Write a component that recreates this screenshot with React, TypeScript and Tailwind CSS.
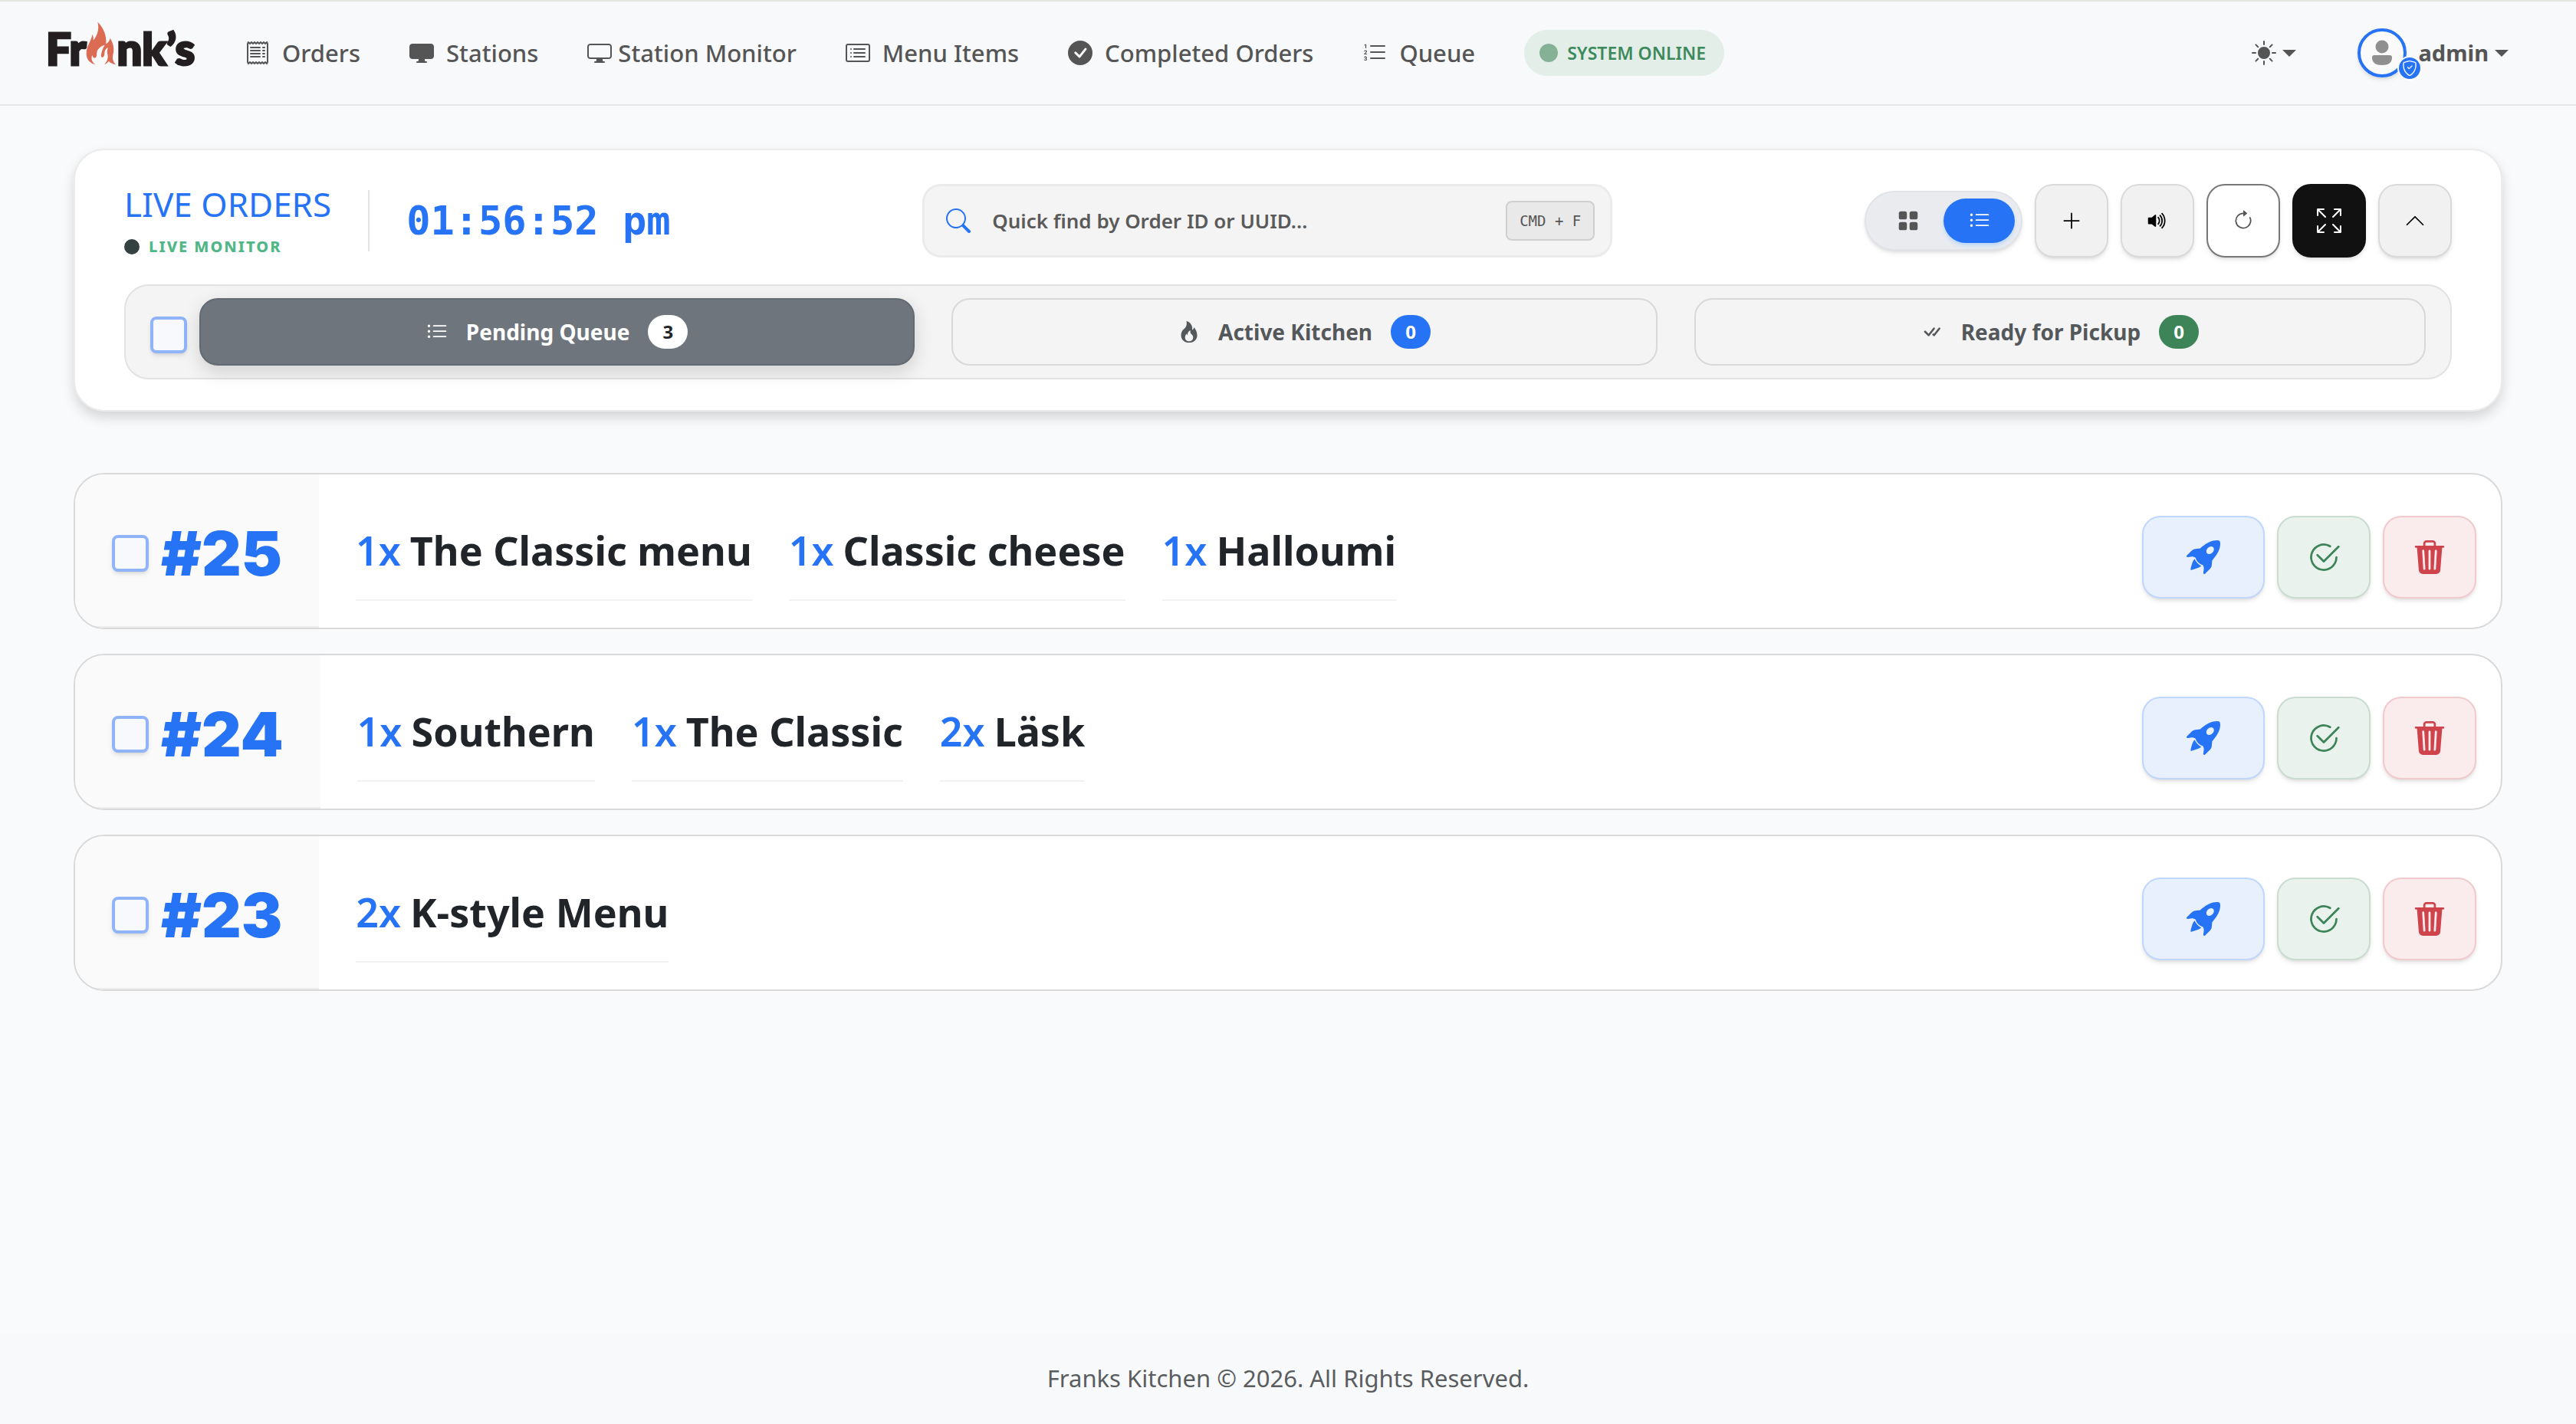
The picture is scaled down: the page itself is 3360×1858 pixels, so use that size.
import type { ReactNode } from "react";
import {
  BsArrowClockwise,
  BsArrowsFullscreen,
  BsCardList,
  BsCheck2Circle,
  BsCheckAll,
  BsCheckCircleFill,
  BsChevronUp,
  BsDisplay,
  BsDisplayFill,
  BsFire,
  BsGridFill,
  BsListOl,
  BsListUl,
  BsPlusLg,
  BsReceipt,
  BsRocketTakeoffFill,
  BsSearch,
  BsShieldCheck,
  BsSunFill,
  BsTrash3Fill,
  BsVolumeUpFill,
} from "react-icons/bs";

const navLinks = [
  { label: "Orders", icon: BsReceipt, gap: "gap-4" },
  { label: "Stations", icon: BsDisplayFill, gap: "gap-4" },
  { label: "Station Monitor", icon: BsDisplay, gap: "gap-2" },
  { label: "Menu Items", icon: BsCardList, gap: "gap-4" },
  { label: "Completed Orders", icon: BsCheckCircleFill, gap: "gap-4" },
  { label: "Queue", icon: BsListOl, gap: "gap-4" },
];

const orders = [
  {
    id: 25,
    items: [
      { qty: 1, name: "The Classic menu" },
      { qty: 1, name: "Classic cheese" },
      { qty: 1, name: "Halloumi" },
    ],
  },
  {
    id: 24,
    items: [
      { qty: 1, name: "Southern" },
      { qty: 1, name: "The Classic" },
      { qty: 2, name: "Läsk" },
    ],
  },
  { id: 23, items: [{ qty: 2, name: "K-style Menu" }] },
];

function Logo() {
  return (
    <a
      href="#"
      aria-label="Frank's"
      className="flex w-[194px] items-baseline pb-4 font-['Lato',sans-serif] text-[58px] leading-[64px] font-black text-[#231f20] [-webkit-text-stroke:3px_#231f20]"
    >
      <span>Fr</span>
      <svg viewBox="188 32 120 170" className="h-[57px] w-10 shrink-0" fill="#db6b52" aria-hidden="true">
        <path d="M234 34C258 58 270 88 267 120C276 114 282 106 283 97C297 120 300 142 294 162C290 180 297 192 305 200C293 198 282 193 277 187C273 193 267 198 260 200C273 187 277 172 272 157C270 150 273 140 274 133C266 138 261 146 261 156C261 164 258 172 253 172C246 172 247 163 249 156C251 147 255 135 262 124C248 128 234 138 231 152C230 160 232 168 226 173C220 177 214 172 213 163C207 178 212 192 226 200C205 196 189 180 190 155C190 130 207 112 214 82C217 92 218 99 217 106C232 88 242 62 234 34Z" />
      </svg>
      <span>nk’s</span>
    </a>
  );
}

function Caret() {
  return <span className="border-x-[9px] border-t-[9px] border-x-transparent border-t-[#555]" />;
}

function Navbar() {
  return (
    <header className="flex h-[138px] items-center border-t-2 border-b-2 border-t-[#e4e5e0] border-b-[#e5e6e8] bg-[#f8f9fb] pr-[88px] pl-[60px] text-[#555]">
      <Logo />
      <nav className="ml-[66px] flex items-center gap-16">
        {navLinks.map(({ label, icon: Icon, gap }) => (
          <a key={label} href="#" className={`flex items-center text-[31px] font-medium whitespace-nowrap ${gap}`}>
            <Icon className="size-8" />
            {label}
          </a>
        ))}
        <div className="flex h-[60px] items-center gap-3 rounded-full bg-[#e4eee9] pr-6 pl-5 text-[23px] font-semibold whitespace-nowrap text-[#3c8a5c]">
          <span className="size-6 rounded-full bg-[#85b196]" />
          SYSTEM ONLINE
        </div>
      </nav>
      <div className="ml-auto flex items-center gap-20">
        <button type="button" aria-label="Theme" className="flex items-center gap-2">
          <BsSunFill className="size-8" />
          <Caret />
        </button>
        <button type="button" className="flex items-center gap-2 text-[29px] font-bold">
          <span className="relative mr-2 flex size-16 items-center justify-center rounded-full border-4 border-[#2773f6] bg-[#fafafa] shadow-md">
            <svg viewBox="0 0 28 34" className="h-[34px] w-7" fill="#8f8f8f" aria-hidden="true">
              <circle cx="14" cy="9" r="8.5" />
              <path d="M4 20h20a3 3 0 0 1 3 3c0 7-5 10-13 10S1 30 1 23a3 3 0 0 1 3-3Z" />
            </svg>
            <span className="absolute -right-6 -bottom-2 flex size-8 items-center justify-center rounded-full border-2 border-white bg-[#2773f6] text-white">
              <BsShieldCheck className="size-5" />
            </span>
          </span>
          <span>admin</span>
          <Caret />
        </button>
      </div>
    </header>
  );
}

function Checkbox({ label }: { label: string }) {
  return (
    <input
      type="checkbox"
      aria-label={label}
      className="size-12 shrink-0 appearance-none rounded-lg border-4 border-[#8fb4fa] bg-[#f8f9fc] shadow-md checked:bg-[#2773f6]"
    />
  );
}

function ToolButton({ label, className, children }: { label: string; className: string; children: ReactNode }) {
  return (
    <button
      type="button"
      aria-label={label}
      className={`flex size-24 items-center justify-center rounded-3xl border-2 shadow-md ${className}`}
    >
      {children}
    </button>
  );
}

function QueueTab({ label, count, icon, className, badge }: { label: string; count: number; icon: ReactNode; className: string; badge: string }) {
  return (
    <button
      type="button"
      className={`flex h-[88px] flex-auto items-center justify-center gap-6 rounded-3xl border-2 text-[28px] font-bold ${className}`}
    >
      {icon}
      {label}
      <span className={`flex h-11 w-[52px] items-center justify-center rounded-full text-2xl ${badge}`}>{count}</span>
    </button>
  );
}

function ControlPanel() {
  return (
    <section className="rounded-[40px] border-2 border-[#ebebeb] bg-white px-16 pt-11 pb-10 shadow-[0_8px_16px_rgba(0,0,0,0.15)]">
      <div className="flex items-center justify-between">
        <div className="flex items-center">
          <div>
            <h1 className="mb-4 text-[44px] leading-[52px] text-[#2773f6]">LIVE ORDERS</h1>
            <p className="flex items-center gap-3 text-xl font-extrabold tracking-widest text-[#52b788]">
              <span className="size-5 rounded-full bg-[#354040]" />
              LIVE MONITOR
            </p>
          </div>
          <time className="ml-12 flex h-20 items-center border-l-2 border-[#e5e5e5] pl-12 font-['DejaVu_Sans_Mono',monospace] text-[52px] font-bold whitespace-nowrap text-[#2773f6]">
            01:56:52 pm
          </time>
        </div>

        <label className="flex h-24 w-[900px] items-center rounded-3xl border-3 border-[#ebebeb] bg-[#f4f4f4] pr-5 pl-7">
          <BsSearch className="size-8 text-[#2773f6]" />
          <input
            type="text"
            aria-label="Quick find"
            placeholder="Quick find by Order ID or UUID..."
            className="ml-7 flex-1 bg-transparent text-[26px] font-semibold outline-none placeholder:text-[#5a5a5a]"
          />
          <kbd className="flex h-[52px] items-center rounded-lg border-2 border-[#cfcfcf] bg-[#e9e9e9] px-4 font-['DejaVu_Sans_Mono',monospace] text-[19px] text-[#555]">
            CMD + F
          </kbd>
        </label>

        <div className="flex items-center gap-4">
          <div className="flex h-[78px] items-center rounded-full border-2 border-[#e0e3e8] bg-[#e9ebef] px-2 shadow-md">
            <button type="button" aria-label="Grid view" aria-pressed="false" className="flex h-[58px] w-[93px] items-center justify-center text-[#555]">
              <BsGridFill className="size-7" />
            </button>
            <button
              type="button"
              aria-label="List view"
              aria-pressed="true"
              className="flex h-[58px] w-[93px] items-center justify-center rounded-full bg-[#2773f6] text-white shadow-md shadow-blue-300/50"
            >
              <BsListUl className="size-7" />
            </button>
          </div>
          <ToolButton label="New order" className="border-[#dadada] bg-[#f1f1f1] text-black">
            <BsPlusLg className="size-7" />
          </ToolButton>
          <ToolButton label="Sound" className="border-[#dadada] bg-[#f1f1f1] text-black">
            <BsVolumeUpFill className="size-7" />
          </ToolButton>
          <ToolButton label="Refresh" className="border-[#777] bg-white text-[#555]">
            <BsArrowClockwise className="size-7" />
          </ToolButton>
          <ToolButton label="Full screen" className="border-[#111] bg-[#111] text-white">
            <BsArrowsFullscreen className="size-8" />
          </ToolButton>
          <ToolButton label="Collapse" className="border-[#dadada] bg-[#f1f1f1] text-black">
            <BsChevronUp className="size-7" />
          </ToolButton>
        </div>
      </div>

      <div className="mt-[35px] flex h-[124px] items-center rounded-[32px] border-2 border-[#e2e2e2] bg-[#f4f4f4] px-8">
        <div className="flex pt-2">
          <Checkbox label="Select all orders" />
        </div>
        <div className="ml-4 flex flex-1 gap-12">
          <QueueTab
            label="Pending Queue"
            count={3}
            icon={<BsListUl className="size-7" />}
            className="border-[#646a71] bg-[#6e757d] text-white shadow-[0_8px_24px_rgba(0,0,0,0.15)]"
            badge="bg-white text-[#212529]"
          />
          <QueueTab
            label="Active Kitchen"
            count={0}
            icon={<BsFire className="size-7" />}
            className="border-[#d8d8d8] text-[#55585b]"
            badge="bg-[#2773f6] text-white"
          />
          <QueueTab
            label="Ready for Pickup"
            count={0}
            icon={<BsCheckAll className="size-7" />}
            className="border-[#d8d8d8] text-[#55585b]"
            badge="bg-[#3d8558] text-white"
          />
        </div>
      </div>
    </section>
  );
}

function OrderRow({ order }: { order: (typeof orders)[number] }) {
  return (
    <li className="flex h-[204px] overflow-hidden rounded-[40px] border-2 border-[#d9d9d9] bg-white">
      <div className="flex items-center gap-4 border-b-2 border-[#ededed] bg-[#fafafa] px-12 pt-2">
        <Checkbox label={`Select order ${order.id}`} />
        <strong className="font-['Inter',sans-serif] text-[80px] leading-none font-black text-[#2773f6]">#{order.id}</strong>
      </div>
      <ul className="flex items-center gap-12 pl-12 text-[52px] leading-[64px] font-bold text-[#212529]">
        {order.items.map((item) => (
          <li key={item.name} className="mt-4 flex gap-3 border-b-2 border-[#f1f1f1] pt-4 pb-8 whitespace-nowrap">
            <span className="font-semibold text-[#2773f6]">{item.qty}x</span>
            <span>{item.name}</span>
          </li>
        ))}
      </ul>
      <div className="mt-4 mr-8 ml-auto flex items-center gap-4">
        <button
          type="button"
          aria-label="Start order"
          className="flex h-[108px] w-40 items-center justify-center rounded-3xl border-2 border-[#bfd6fd] bg-[#e8f0fe] text-[#2773f6] shadow-md"
        >
          <BsRocketTakeoffFill className="size-11" />
        </button>
        <button
          type="button"
          aria-label="Complete order"
          className="flex h-[108px] w-[122px] items-center justify-center rounded-3xl border-2 border-[#c8ddd0] bg-[#e9f2ed] text-[#3d8558] shadow-md"
        >
          <BsCheck2Circle className="size-11" />
        </button>
        <button
          type="button"
          aria-label="Delete order"
          className="flex h-[108px] w-[122px] items-center justify-center rounded-3xl border-2 border-[#f2c9cc] bg-[#faebec] text-[#cf444c] shadow-md"
        >
          <BsTrash3Fill className="size-11" />
        </button>
      </div>
    </li>
  );
}

export default function App() {
  return (
    <div className="flex min-h-screen flex-col bg-[#f9fafc] font-['Noto_Sans',sans-serif]">
      <Navbar />
      <main className="flex flex-1 flex-col gap-20 px-24 pt-14">
        <ControlPanel />
        <ul className="flex flex-col gap-8">
          {orders.map((order) => (
            <OrderRow key={order.id} order={order} />
          ))}
        </ul>
      </main>
      <footer className="bg-[#f8f9fb] py-9 text-center text-[31px] leading-[48px] text-[#5a5d60]">
        Franks Kitchen © 2026. All Rights Reserved.
      </footer>
    </div>
  );
}
